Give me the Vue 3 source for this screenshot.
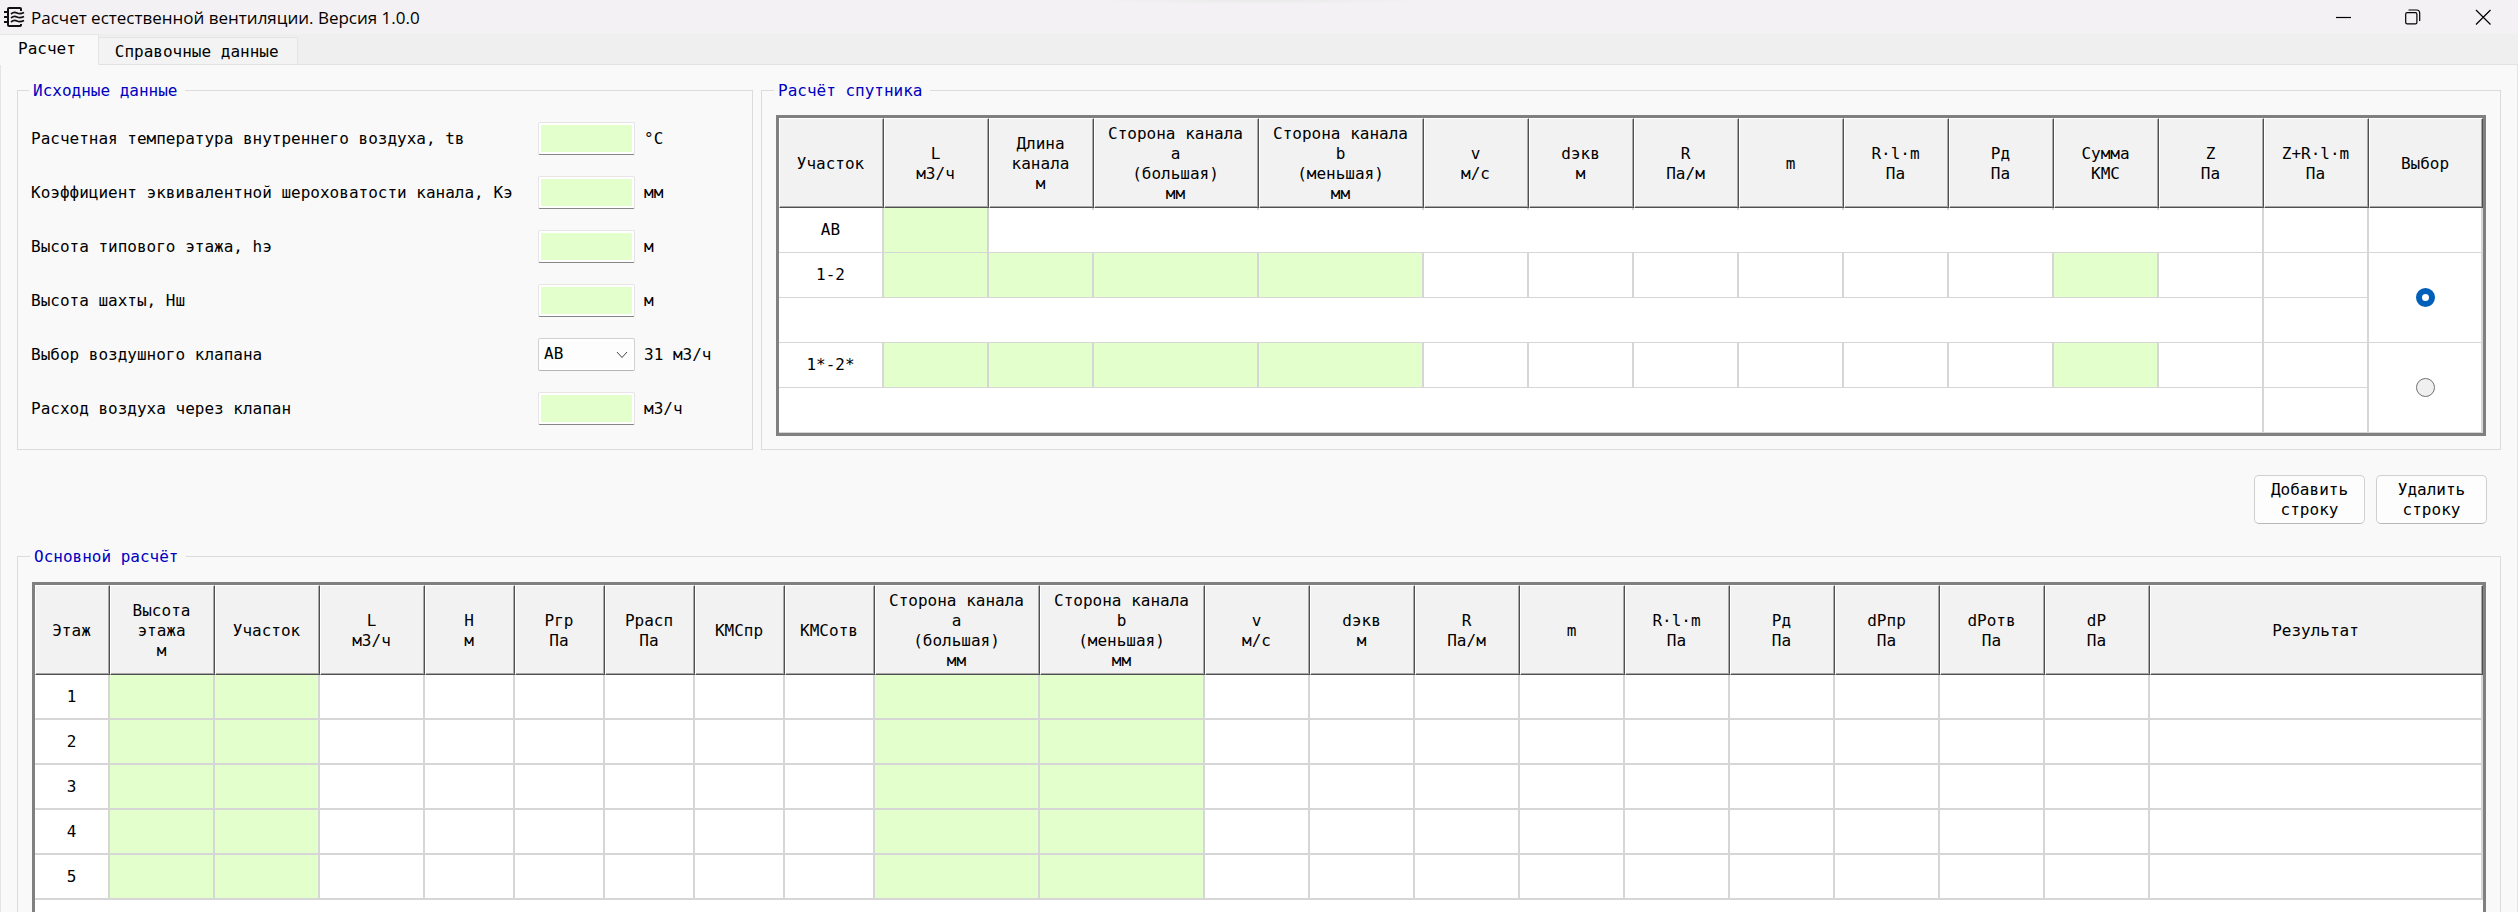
<script setup>
import { ref } from 'vue'

const tab = ref('calc')
const branch = ref('1-2')
const valve = ref('АВ')

const fields = [
  { id: 'temp', label: 'Расчетная температура внутреннего воздуха, tв', unit: '°C' },
  { id: 'rough', label: 'Коэффициент эквивалентной шероховатости канала, Кэ', unit: 'мм' },
  { id: 'floor', label: 'Высота типового этажа, hэ', unit: 'м' },
  { id: 'shaft', label: 'Высота шахты, Hш', unit: 'м' },
  { id: 'valve', label: 'Выбор воздушного клапана', unit: '31 м3/ч', select: true },
  { id: 'flow', label: 'Расход воздуха через клапан', unit: 'м3/ч' },
]

const sideA = { text: 'Сторона канала\na\n(большая)\nмм', w: 165, edit: true }
const sideB = { text: 'Сторона канала\nb\n(меньшая)\nмм', w: 165, edit: true }

const branchCols = [
  { text: 'Участок', w: 105 },
  { text: 'L\nм3/ч', w: 105, edit: true },
  { text: 'Длина\nканала\nм', w: 105, edit: true },
  sideA,
  sideB,
  { text: 'v\nм/с', w: 105 },
  { text: 'dэкв\nм', w: 105 },
  { text: 'R\nПа/м', w: 105 },
  { text: 'm', w: 105 },
  { text: 'R·l·m\nПа', w: 105 },
  { text: 'Рд\nПа', w: 105 },
  { text: 'Сумма\nКМС', w: 105, edit: true },
  { text: 'Z\nПа', w: 105 },
  { text: 'Z+R·l·m\nПа', w: 105 },
  { text: 'Выбор' },
]
const branches = ['1-2', '1*-2*']
const branchCells = branchCols.slice(1, 14)

const mainCols = [
  { text: 'Этаж', w: 75 },
  { text: 'Высота\nэтажа\nм', w: 105, edit: true },
  { text: 'Участок', w: 105, edit: true },
  { text: 'L\nм3/ч', w: 105 },
  { text: 'H\nм', w: 90 },
  { text: 'Ргр\nПа', w: 90 },
  { text: 'Ррасп\nПа', w: 90 },
  { text: 'КМСпр', w: 90 },
  { text: 'КМСотв', w: 90 },
  sideA,
  sideB,
  { text: 'v\nм/с', w: 105 },
  { text: 'dэкв\nм', w: 105 },
  { text: 'R\nПа/м', w: 105 },
  { text: 'm', w: 105 },
  { text: 'R·l·m\nПа', w: 105 },
  { text: 'Рд\nПа', w: 105 },
  { text: 'dPпр\nПа', w: 105 },
  { text: 'dPотв\nПа', w: 105 },
  { text: 'dP\nПа', w: 105 },
  { text: 'Результат' },
]
const mainCells = mainCols.slice(1)
const floors = ref([1, 2, 3, 4, 5])

const width = (c) => (c.w ? { width: c.w + 'px' } : {})
const name = (c, row) => c.text.replace(/\n/g, ' ') + ', ' + row
const addRow = () => floors.value.push(floors.value.length + 1)
const removeRow = () => floors.value.pop()
</script>

<template>
  <div class="window">
    <header class="titlebar">
      <svg class="app-icon" viewBox="0 0 22 22" width="22" height="22" fill="none" stroke="#111">
        <path stroke-width="2" d="M18 5V3Q18 2 17 2H6Q5 2 5 3V19Q5 20 6 20H17Q18 20 18 19V18" />
        <path stroke-width="2" d="M1 6H5M1 11H5M1 16H5" />
        <path stroke-width="1.7" d="M8 8Q11 5.500 14 7T21 6.500M8 12Q11 9.500 14 11T21 10.500M8 16Q11 13.500 14 15T21 14.500" />
      </svg>
      <h1>Расчет естественной вентиляции. Версия 1.0.0</h1>
      <div class="controls">
        <button type="button" aria-label="Свернуть">
          <svg viewBox="0 0 16 16" width="16" height="16"><path d="M1 8.500H16" /></svg>
        </button>
        <button type="button" aria-label="Восстановить">
          <svg viewBox="0 0 16 16" width="16" height="16">
            <rect x="0.7" y="3.7" width="11.2" height="11.2" rx="1.5" />
            <path d="M3.5 1H11.5Q14.7 1 14.7 4.2V12" />
          </svg>
        </button>
        <button type="button" aria-label="Закрыть">
          <svg viewBox="0 0 16 16" width="16" height="16"><path d="M1 1L15.500 15.500M15.500 1L1 15.500" /></svg>
        </button>
      </div>
    </header>

    <nav class="tabs" role="tablist">
      <button type="button" role="tab" :aria-selected="tab === 'calc'" :class="{ active: tab === 'calc' }" @click="tab = 'calc'">Расчет</button>
      <button type="button" role="tab" :aria-selected="tab === 'ref'" :class="{ active: tab === 'ref' }" @click="tab = 'ref'">Справочные данные</button>
    </nav>

    <main class="page">
      <div class="top">
        <fieldset class="inputs">
          <legend>Исходные данные</legend>
          <div v-for="f in fields" :key="f.id" class="field">
            <label :for="f.id">{{ f.label }}</label>
            <div v-if="f.select" class="combo">
              <select :id="f.id" v-model="valve">
                <option>АВ</option>
              </select>
              <svg viewBox="0 0 12 8" width="12" height="8"><path d="M1 1L6 6.5L11 1" /></svg>
            </div>
            <input v-else :id="f.id" type="text" />
            <span>{{ f.unit }}</span>
          </div>
        </fieldset>

        <fieldset class="branch">
          <legend>Расчёт спутника</legend>
          <div class="frame">
            <table class="grid thin">
              <colgroup><col v-for="c in branchCols" :key="c.text" :style="width(c)" /></colgroup>
              <thead>
                <tr><th v-for="c in branchCols" :key="c.text" scope="col">{{ c.text }}</th></tr>
              </thead>
              <tbody>
                <tr>
                  <td>АВ</td>
                  <td class="edit"><input type="text" aria-label="L м3/ч, АВ" /></td>
                  <td colspan="11"></td>
                  <td></td>
                  <td></td>
                </tr>
                <template v-for="b in branches" :key="b">
                  <tr>
                    <td>{{ b }}</td>
                    <td v-for="c in branchCells" :key="c.text" :class="{ edit: c.edit }">
                      <input v-if="c.edit" type="text" :aria-label="name(c, b)" />
                    </td>
                    <td rowspan="2">
                      <input v-model="branch" type="radio" name="branch" :value="b" :aria-label="'Выбор ' + b" />
                    </td>
                  </tr>
                  <tr>
                    <td colspan="13"></td>
                    <td></td>
                  </tr>
                </template>
              </tbody>
            </table>
          </div>
        </fieldset>
      </div>

      <div class="actions">
        <button type="button" @click="addRow">Добавить строку</button>
        <button type="button" @click="removeRow">Удалить строку</button>
      </div>

      <fieldset class="main-calc">
        <legend>Основной расчёт</legend>
        <div class="frame">
          <table class="grid">
            <colgroup><col v-for="c in mainCols" :key="c.text" :style="width(c)" /></colgroup>
            <thead>
              <tr><th v-for="c in mainCols" :key="c.text" scope="col">{{ c.text }}</th></tr>
            </thead>
            <tbody>
              <tr v-for="n in floors" :key="n">
                <td>{{ n }}</td>
                <td v-for="c in mainCells" :key="c.text" :class="{ edit: c.edit }">
                  <input v-if="c.edit" type="text" :aria-label="name(c, n)" />
                </td>
              </tr>
            </tbody>
          </table>
        </div>
      </fieldset>
    </main>
  </div>
</template>

<style>
body {
  margin: 0;
}
</style>

<style scoped>
.window {
  box-sizing: border-box;
  display: flex;
  flex-direction: column;
  height: 100vh;
  overflow: hidden;
  background: #efefef;
  color: #000;
  font: 16px/20px "DejaVu Sans Mono", monospace;
}
.window * {
  box-sizing: border-box;
}
button,
input,
select {
  margin: 0;
  color: inherit;
  font: inherit;
}
.titlebar {
  display: flex;
  flex: none;
  align-items: center;
  height: 34px;
  padding-left: 3px;
  background: radial-gradient(closest-side, #eaeaea, #f3f1f3) center -4px / 340px 8px no-repeat #f3f1f3;
}
.titlebar h1 {
  flex: 1;
  margin: 0 0 0 6px;
  padding-top: 2px;
  font: 17px/24px "Open Sans", sans-serif;
}
.controls {
  display: flex;
}
.controls button {
  display: grid;
  place-items: center;
  width: 70px;
  height: 34px;
  padding: 0;
  border: 0;
  background: none;
}
.controls svg {
  fill: none;
  stroke: #000;
  stroke-width: 1.2;
}
.tabs {
  display: flex;
  flex: none;
  align-items: flex-end;
  height: 31px;
  border-bottom: 1px solid #e2e2e2;
}
.tabs button {
  height: 27px;
  padding: 1px 18px 0 16px;
  border: 1px solid #e5e5e5;
  border-width: 1px 1px 0 0;
  background: #f3f3f3;
}
.tabs .active {
  height: 31px;
  margin-bottom: -1px;
  padding: 0 22px 2px 18px;
  background: #f9f9f9;
}
.page {
  flex: 1;
  min-height: 0;
  padding: 15px 16px 0;
  border: 1px solid #e5e5e5;
  border-width: 0 1px;
  background: #f9f9f9;
}
fieldset {
  min-width: 0;
  margin: 0;
  border: 1px solid #dcdcdc;
}
legend {
  margin-left: -2px;
  padding: 1px 7px 0 4px;
  color: #0000c0;
}
.top {
  display: flex;
  gap: 8px;
}
.inputs {
  flex: none;
  width: 736px;
  padding: 10px 13px 0;
}
.field {
  display: grid;
  grid-template-columns: 1fr 97px 95px;
  column-gap: 9px;
  align-items: center;
  height: 54px;
}
.field label,
.field span {
  padding-top: 1px;
}
.field input,
.combo select {
  width: 100%;
  height: 33px;
  padding: 0 5px;
  border: 1px solid #e5e5e5;
  border-bottom-color: #868686;
  border-radius: 2px;
  background: #e3ffcb;
  box-shadow: inset 0 0 0 2px #fff;
}
.combo {
  position: relative;
}
.combo select {
  border-color: #d0d0d0;
  border-bottom-color: #b5b5b5;
  background: #fdfdfd;
  appearance: none;
}
.combo svg {
  position: absolute;
  top: 13px;
  right: 7px;
  fill: none;
  stroke: #444;
  pointer-events: none;
}
.branch {
  flex: 1;
  padding: 14px 14px 13px;
}
.frame {
  border: 3px solid #808080;
  background: #fff;
}
.grid {
  width: 100%;
  border-spacing: 0;
  table-layout: fixed;
}
th {
  position: relative;
  height: 90px;
  padding: 2px 2px 0 0;
  border: 1px solid #fff;
  border-right-color: #505050;
  border-bottom-color: #505050;
  background: #f2f2f2;
  box-shadow: inset -1px -1px #a8a8a8;
  font-weight: normal;
  white-space: pre-line;
}
th::after {
  position: absolute;
  right: -1px;
  bottom: -3px;
  width: 2px;
  height: 2px;
  background: #d6d6d6;
  content: "";
}
td {
  height: 45px;
  padding: 0;
  border: solid #d6d6d6;
  border-width: 0 2px 2px 0;
  text-align: center;
}
.thin td {
  border-bottom-width: 1px;
}
.edit {
  background: #e3ffcb;
}
.edit input {
  display: block;
  width: 100%;
  height: 42px;
  padding: 0 4px;
  border: 0;
  background: none;
  text-align: center;
}
input[type="radio"] {
  display: block;
  width: 19px;
  height: 19px;
  margin: 0 auto;
  border: 1px solid #707070;
  border-radius: 50%;
  background: #f0f0f0;
  appearance: none;
}
input[type="radio"]:checked {
  border: 6px solid #005fb8;
  background: #fff;
}
.actions {
  display: flex;
  gap: 11px;
  justify-content: flex-end;
  margin: 25px 14px 22px 0;
}
.actions button {
  width: 111px;
  height: 49px;
  padding: 0 12px;
  border: 1px solid #d0d0d0;
  border-bottom-color: #b8b8b8;
  border-radius: 5px;
  background: #fdfdfd;
}
.main-calc {
  padding: 15px 14px;
}
.main-calc .frame {
  min-height: 400px;
}
</style>
